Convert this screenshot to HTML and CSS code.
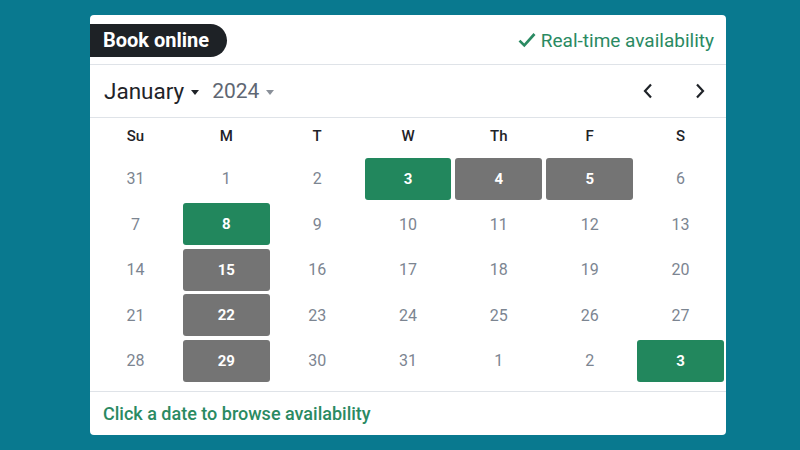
FILE: index.html
```html
<!DOCTYPE html>
<html>
<head>
<meta charset="utf-8">
<link rel="stylesheet" href="styles.css">
</head>
<body>
<div class="card">
  <div class="top">
    <div class="pill">Book online</div>
    <div class="rt">
      <svg class="check" width="18" height="16" viewBox="0 0 18 16"><path d="M1.5 8.6 L6.3 13.4 L16.5 2" fill="none" stroke="#2a8a62" stroke-width="2.7" stroke-linecap="butt"/></svg>
      <span>Real-time availability</span>
    </div>
  </div>
  <div class="monthbar">
    <div class="sel">
      <span class="month">January</span><span class="caret dark"></span>
      <span class="year">2024</span><span class="caret light"></span>
    </div>
    <div class="navs">
      <svg width="12" height="16" viewBox="0 0 12 16"><path d="M9 1.5 L3 8 L9 14.5" fill="none" stroke="#1f2328" stroke-width="2.2"/></svg>
      <svg width="12" height="16" viewBox="0 0 12 16"><path d="M3 1.5 L9 8 L3 14.5" fill="none" stroke="#1f2328" stroke-width="2.2"/></svg>
    </div>
  </div>
  <div class="grid">
    <div class="dow">Su</div><div class="dow">M</div><div class="dow">T</div><div class="dow">W</div><div class="dow">Th</div><div class="dow">F</div><div class="dow">S</div>
    <div class="d">31</div><div class="d">1</div><div class="d">2</div><div class="d g">3</div><div class="d x">4</div><div class="d x">5</div><div class="d">6</div>
    <div class="d">7</div><div class="d g">8</div><div class="d">9</div><div class="d">10</div><div class="d">11</div><div class="d">12</div><div class="d">13</div>
    <div class="d">14</div><div class="d x">15</div><div class="d">16</div><div class="d">17</div><div class="d">18</div><div class="d">19</div><div class="d">20</div>
    <div class="d">21</div><div class="d x">22</div><div class="d">23</div><div class="d">24</div><div class="d">25</div><div class="d">26</div><div class="d">27</div>
    <div class="d">28</div><div class="d x">29</div><div class="d">30</div><div class="d">31</div><div class="d">1</div><div class="d">2</div><div class="d g">3</div>
  </div>
  <div class="foot">Click a date to browse availability</div>
</div>
</body>
</html>
```
FILE: styles.css
```css
html, body { margin: 0; padding: 0; }
body {
  background: #09798f;
  width: 800px;
  height: 450px;
  font-family: Roboto, "Liberation Sans", sans-serif;
  overflow: hidden;
}
.card {
  margin: 15px 0 0 90px;
  width: 636px;
  height: 420px;
  background: #fff;
  border-radius: 4px;
  display: flex;
  flex-direction: column;
  box-sizing: border-box;
}
.top {
  height: 50px;
  display: flex;
  align-items: center;
  justify-content: space-between;
  border-bottom: 1px solid #dfe3e8;
  box-sizing: border-box;
  padding-top: 1px;
}
.pill {
  background: #1e2226;
  color: #fff;
  font-weight: 700;
  font-size: 20px;
  height: 33px;
  line-height: 33px;
  padding: 0 18px 0 13px;
  border-radius: 0 17px 17px 0;
}
.rt {
  display: flex;
  align-items: center;
  gap: 4px;
  color: #2a8a62;
  font-size: 19px;
  padding-right: 12px;
}
.check { margin-top: -1px; margin-right: 1px; }
.monthbar {
  height: 53px;
  display: flex;
  align-items: center;
  justify-content: space-between;
  border-bottom: 1px solid #dfe3e8;
  box-sizing: border-box;
  padding: 0 20px 0 14px;
}
.sel { display: flex; align-items: center; }
.month { font-size: 22.5px; color: #1f2328; }
.year { font-size: 21px; color: #5f6773; margin-left: 13px; }
.caret {
  width: 0; height: 0;
  border-left: 4px solid transparent;
  border-right: 4px solid transparent;
  margin-left: 7px;
  margin-top: 2px;
}
.caret.dark { border-top: 5px solid #1f2328; }
.caret.light { border-top: 5px solid #8a9099; }
.navs { display: flex; gap: 40px; align-items: center; }
.navs svg { display: block; }
.grid {
  display: grid;
  grid-template-columns: repeat(7, 1fr);
  grid-template-rows: 36px;
  grid-auto-rows: 42px;
  column-gap: 4px;
  row-gap: 3.6px;
  padding: 0 2px 0 2px;
  height: 274px;
  box-sizing: border-box;
  border-bottom: 1px solid #dfe3e8;
}
.dow {
  display: flex;
  align-items: center;
  justify-content: center;
  font-size: 15px;
  font-weight: 500;
  color: #1f2328;
}
.d {
  display: flex;
  align-items: center;
  justify-content: center;
  font-size: 16px;
  color: #7c8591;
  border-radius: 3px;
}
.d.g { background: #22875d; color: #fff; font-weight: 700; font-size: 15px; }
.d.x { background: #747474; color: #fff; font-weight: 700; font-size: 15px; }
.foot {
  flex: 1;
  display: flex;
  align-items: center;
  padding-left: 13px;
  color: #2a8a62;
  font-weight: 500;
  font-size: 18px;
}
```
